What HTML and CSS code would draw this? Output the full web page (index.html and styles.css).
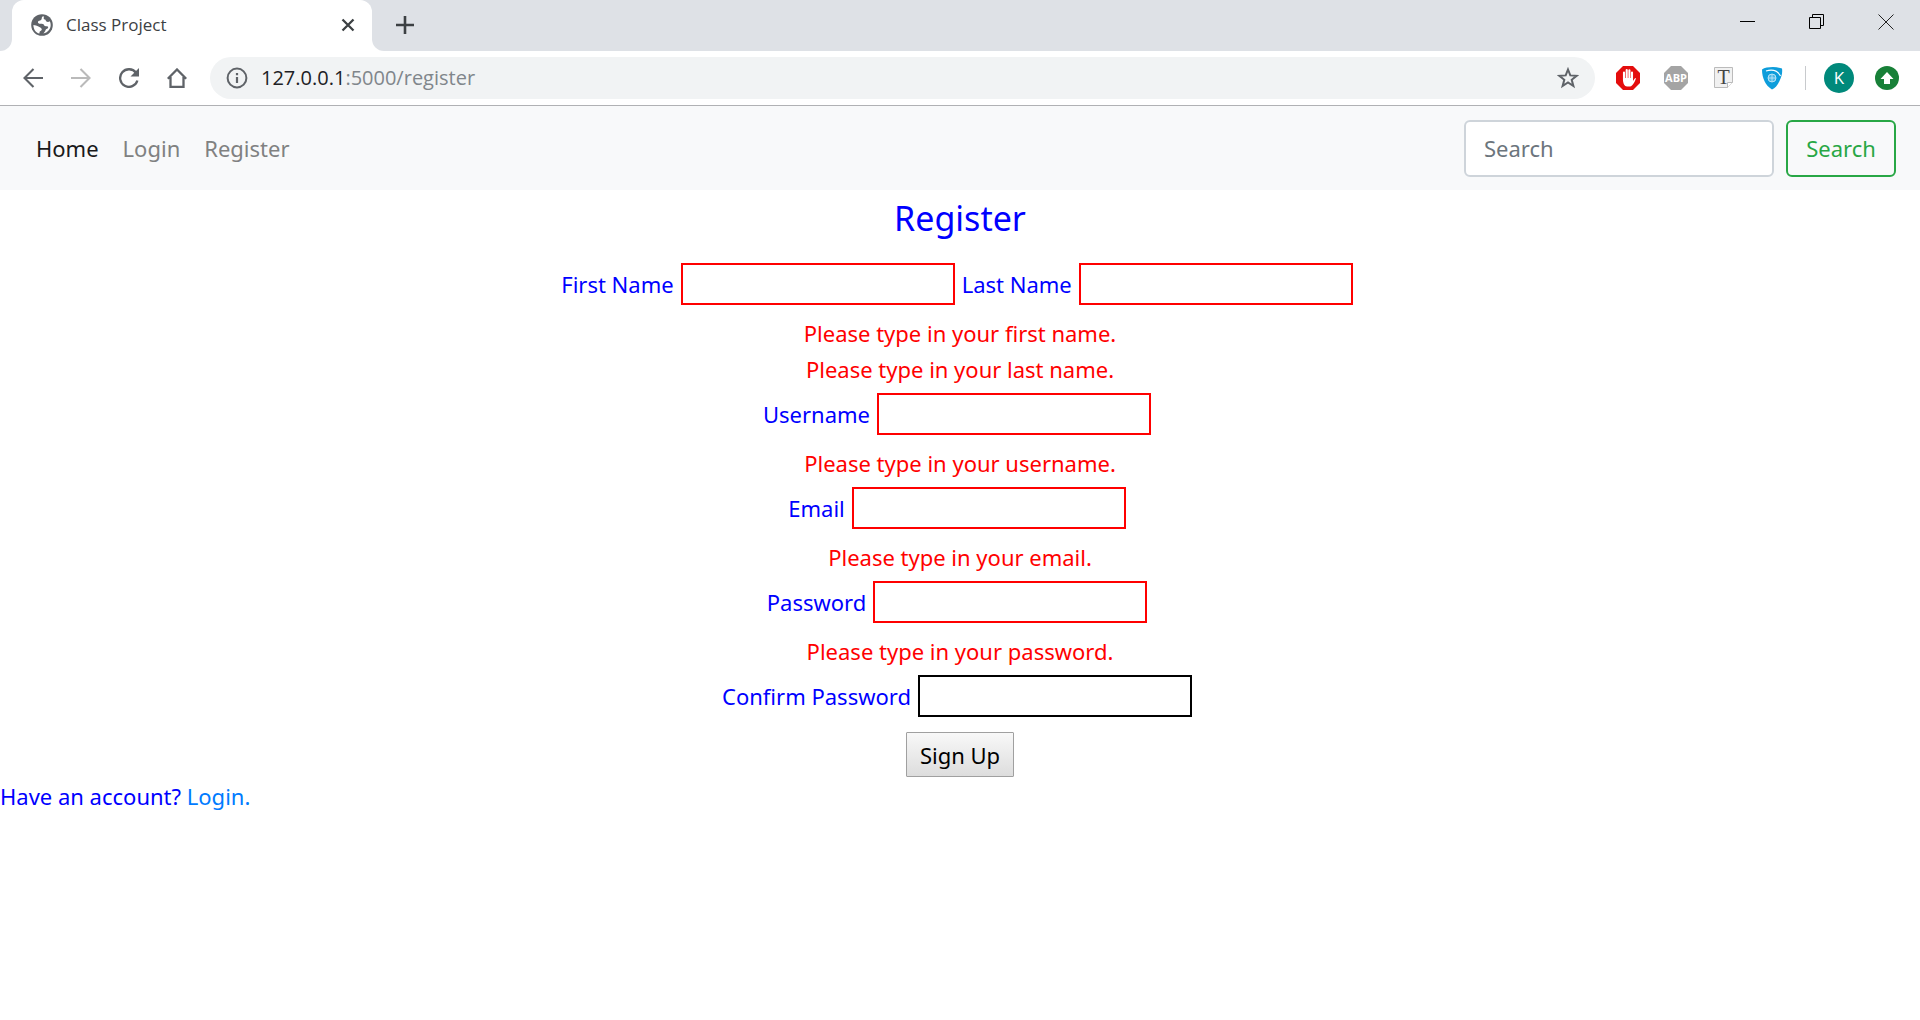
FILE: index.html
```html
<!DOCTYPE html>
<html lang="en">
<head>
<meta charset="utf-8">
<title>Class Project</title>
<link rel="stylesheet" href="styles.css">
</head>
<body>
<header class="browser">
  <div class="tabstrip">
    <div class="strip-start"></div>
    <div class="tab-slot">
      <div class="tab">
        <svg class="icon22" viewBox="0 0 22 22"><circle cx="11" cy="11" r="10.800" fill="#5f6368"/><path fill="#fff" d="M12 2.300C10 3.300 11.500 5 10 6 8.800 7 7.500 6.200 7 7.800c-.5 1.500 1 2 2.500 2 2 0 3 0 3.500 1.300.4 1.300 2 1.200 3 1.200 1.200 0 1.600 1 .8 2-1 1-1.600.6-2.200 1.700-.6 1.300-1 2-2.200 3.500C16.500 18.800 19.700 15 19.700 11c0-1.500-.3-2.700-.9-3.800-1 .8-2.300 1-3.300.3-1-.8-.5-1.800-1.600-2-1.300-.3-1.600-1.400-.8-2.800zM2.400 11c0 4.500 2.500 7.700 6 8.600.2-1.600 0-2.200 1.500-2.800 1.500-.8 1-2.200-.2-3C8 12.800 6.500 11.500 2.400 11z"/></svg>
        <span class="tab-title">Class Project</span>
        <button class="plain" aria-label="Close tab"><svg class="icon14" viewBox="0 0 14 14"><path d="M1.500 1.500l11 11M12.500 1.500l-11 11" stroke="#3c4043" stroke-width="2.300"/></svg></button>
      </div>
    </div>
    <div class="strip-rest">
      <button class="plain" aria-label="New tab"><svg class="icon18" viewBox="0 0 18 18"><path d="M9 0v18M0 9h18" stroke="#3c4043" stroke-width="2.600"/></svg></button>
      <div class="window-buttons">
        <button class="plain" aria-label="Minimize"><svg class="icon16" viewBox="0 0 16 16"><path d="M0 7.500h15" stroke="#000"/></svg></button>
        <button class="plain" aria-label="Restore"><svg class="icon16" viewBox="0 0 16 16"><path d="M.5 3.500h11v11H.5zM3.500 3.500v-3h11v11h-3" fill="none" stroke="#000"/></svg></button>
        <button class="plain" aria-label="Close window"><svg class="icon16" viewBox="0 0 16 16"><path d="M.5.5l15 15M15.500.5l-15 15" stroke="#222"/></svg></button>
      </div>
    </div>
  </div>
  <div class="toolbar">
    <div class="controls">
      <button class="plain" aria-label="Back"><svg class="icon20" viewBox="0 0 20 20"><path d="M20 10H2M10.500 1L1.500 10l9 9" fill="none" stroke="#5f6368" stroke-width="2.100"/></svg></button>
      <button class="plain" aria-label="Forward"><svg class="icon20" viewBox="0 0 20 20"><path d="M0 10h18M9.500 1l9 9-9 9" fill="none" stroke="#bababa" stroke-width="2.100"/></svg></button>
      <button class="plain" aria-label="Reload"><svg class="icon20" viewBox="0 0 20 20"><path d="M17 4.800A8.800 8.800 0 1 0 18.400 12.500" fill="none" stroke="#5f6368" stroke-width="2.300"/><path d="M20 0v8.500h-8.500z" fill="#5f6368"/></svg></button>
      <button class="plain" aria-label="Home page"><svg class="icon20" viewBox="0 0 20 20"><path d="M.8 10.800L10 1.500l9.200 9.300M3.500 9v9.800h13V9" fill="none" stroke="#5f6368" stroke-width="2.300"/></svg></button>
    </div>
    <div class="omnibox">
      <svg class="icon22" viewBox="0 0 22 22"><circle cx="11" cy="11" r="9.400" fill="none" stroke="#5f6368" stroke-width="2"/><path d="M11 10v6M11 6v2.200" stroke="#5f6368" stroke-width="2.200"/></svg>
      <span class="url">127.0.0.1<span class="url-path">:5000/register</span></span>
      <button class="plain" aria-label="Bookmark"><svg class="icon22" viewBox="0 0 22 22"><path d="M11 2.500l2.300 5.900 6.300.4-4.900 4 1.700 6.200-5.400-3.500-5.400 3.500 1.700-6.200-4.900-4 6.300-.4z" fill="none" stroke="#5f6368" stroke-width="2"/></svg></button>
    </div>
    <div class="extensions">
      <svg class="icon24" viewBox="0 0 24 24"><path d="M7 0h10l7 7v10l-7 7H7l-7-7V7z" fill="#e40d0d"/><path d="M8 14V6.500M10.700 12V4M13.400 12V4.300M16 13V6.500" stroke="#fff" stroke-width="2.100" stroke-linecap="round"/><path d="M7 12h10v3c1.500-2.500 2.300-3.500 2.800-3 .6.500-2.800 8.500-5.800 8.500h-3C8.500 20.500 7 17 7 14z" fill="#fff"/></svg>
      <svg class="icon24" viewBox="0 0 24 24"><path d="M7 0h10l7 7v10l-7 7H7l-7-7V7z" fill="#a4a4a4"/><text class="abp" x="12" y="16">ABP</text></svg>
      <svg class="icon24" viewBox="0 0 24 24"><path d="M2.500 1.500h18v15l-5 5h-13z" fill="#f1f1f1" stroke="#bbb"/><path d="M15.500 21.500v-5h5" fill="#fff" stroke="#bbb"/><text class="tee" x="11.500" y="18">T</text></svg>
      <svg class="icon24" viewBox="0 0 24 24"><path d="M2 3.500C6 .8 16 .3 22 2.500c.6 4-.2 8-2.500 12.500-2 4-4.500 7.500-7.500 8.500C5.500 19.500 2 12 2 3.500z" fill="#0d9ddb"/><path d="M6 5c7-2 11.500-.5 14.500 5" fill="none" stroke="#fff" stroke-width="1.200"/><circle cx="12" cy="12" r="4" fill="#4db7e5" stroke="#d5effa" stroke-width=".8"/><path d="M8 12h8M12 8v8" stroke="#d5effa" stroke-width=".7"/></svg>
      <span class="divider"></span>
      <span class="avatar">K</span>
      <svg class="icon24" viewBox="0 0 24 24"><circle cx="12" cy="12" r="12" fill="#188038"/><path d="M12 6l6.500 7H15v5H9v-5H5.500z" fill="#fff"/></svg>
    </div>
  </div>
</header>

<nav class="navbar">
  <div class="nav-links">
    <a class="nav-link active" href="#">Home</a>
    <a class="nav-link" href="#">Login</a>
    <a class="nav-link" href="#">Register</a>
  </div>
  <form class="search">
    <input class="search-input" type="search" placeholder="Search" aria-label="Search">
    <button class="search-button" type="submit">Search</button>
  </form>
</nav>

<main>
  <form class="register">
    <h1 class="heading">Register</h1>
    <div class="row">
      <label for="first">First Name</label>
      <input class="field invalid" id="first" type="text">
      <label for="last">Last Name</label>
      <input class="field invalid" id="last" type="text">
    </div>
    <p class="error">Please type in your first name.</p>
    <p class="error">Please type in your last name.</p>
    <div class="row">
      <label for="user">Username</label>
      <input class="field invalid" id="user" type="text">
    </div>
    <p class="error">Please type in your username.</p>
    <div class="row">
      <label for="email">Email</label>
      <input class="field invalid" id="email" type="text">
    </div>
    <p class="error">Please type in your email.</p>
    <div class="row">
      <label for="pass">Password</label>
      <input class="field invalid" id="pass" type="password">
    </div>
    <p class="error">Please type in your password.</p>
    <div class="row">
      <label for="confirm">Confirm Password</label>
      <input class="field" id="confirm" type="password">
    </div>
    <button class="signup" type="submit">Sign Up</button>
  </form>
  <p class="account">Have an account? <a href="#">Login.</a></p>
</main>
</body>
</html>
```

FILE: styles.css
```css
* { box-sizing: border-box; }

body {
  margin: 0;
  background: #fff;
  color: #00f;
  font-family: "Noto Sans", "Open Sans", sans-serif;
  font-size: 22px;
  font-weight: 400;
  line-height: 36px;
}

button, input { font: inherit; }
p { margin: 0; }
svg { display: block; flex: none; }

.icon14 { width: 14px; height: 14px; }
.icon16 { width: 16px; height: 16px; }
.icon18 { width: 18px; height: 18px; }
.icon20 { width: 20px; height: 20px; }
.icon22 { width: 22px; height: 22px; }
.icon24 { width: 24px; height: 24px; }

.plain { padding: 0; border: 0; background: none; }

/* Browser window */
.browser { border-bottom: 1px solid #b0b1b4; font-family: "Open Sans", "Noto Sans", sans-serif; }

.tabstrip { display: flex; height: 51px; }
.strip-start { width: 12px; background: #dee1e6; border-bottom-right-radius: 12px; }
.tab-slot { width: 360px; background: linear-gradient(#dee1e6 50%, #fff 50%); }
.tab {
  display: flex;
  align-items: center;
  height: 100%;
  padding: 0 17px 2px 19px;
  background: #fff;
  border-radius: 12px 12px 0 0;
}
.tab-title { flex: 1; padding-left: 13px; font-size: 17px; line-height: 24px; color: #3c4043; }
.strip-rest {
  display: flex;
  flex: 1;
  align-items: center;
  justify-content: space-between;
  padding: 0 26px 1px 24px;
  background: #dee1e6;
  border-bottom-left-radius: 12px;
}
.window-buttons { display: flex; gap: 53px; padding-bottom: 7px; }

.toolbar { display: flex; align-items: center; height: 54px; padding: 0 21px 0 23px; }
.controls { display: flex; gap: 28px; }
.omnibox {
  display: flex;
  flex: 1;
  align-items: center;
  height: 42px;
  margin: 0 21px 0 23px;
  padding: 0 16px;
  background: #f1f3f4;
  border-radius: 21px;
}
.url { flex: 1; padding-left: 13px; font-size: 20px; line-height: 28px; color: #202124; }
.url-path { color: #80868b; }
.extensions { display: flex; align-items: center; gap: 24px; }
.abp { font: bold 11px "Open Sans", sans-serif; fill: #fff; text-anchor: middle; }
.tee { font: 20px "Liberation Serif", serif; fill: #444; text-anchor: middle; }
.divider { width: 1px; height: 24px; margin: 0 -6px 0 -3px; background: #c8cacd; }
.avatar {
  width: 30px;
  height: 30px;
  margin-right: -3px;
  border-radius: 50%;
  background: #00897b;
  color: #fff;
  font-size: 17px;
  line-height: 30px;
  text-align: center;
}

/* Site navigation */
.navbar {
  display: flex;
  align-items: center;
  justify-content: space-between;
  height: 84px;
  padding: 0 24px;
  background: #f8f9fa;
}
.nav-links { display: flex; }
.nav-link { padding: 0 12px; color: #808181; text-decoration: none; }
.nav-link.active { color: #1a1a1a; }
.search { display: flex; gap: 12px; }
.search-input {
  width: 310px;
  height: 57px;
  padding: 0 18px;
  border: 2px solid #ced4da;
  border-radius: 6px;
  background: #fff;
  appearance: none;
}
.search-input::placeholder { color: #6c757d; opacity: 1; }
.search-button {
  width: 110px;
  height: 57px;
  padding: 0;
  border: 2px solid #28a745;
  border-radius: 6px;
  background: transparent;
  color: #28a745;
}

/* Registration form */
.register { text-align: center; }
.heading { margin: 0 0 11px; font-size: 34px; font-weight: 400; line-height: 56px; }
.row {
  display: flex;
  justify-content: center;
  align-items: center;
  gap: 7px;
  padding: 6px 6px 10px 0;
}
.field {
  width: 274px;
  height: 42px;
  padding: 2px;
  border: 2px solid #000;
  border-radius: 0;
  background: #fff;
}
.field.invalid { border-color: #f00; }
.error { color: #f00; }
.signup {
  display: block;
  width: 108px;
  height: 45px;
  margin: 5px auto 1px;
  padding: 0;
  border: 1px solid #a0a0a0;
  border-radius: 1px;
  background: linear-gradient(#f8f8f8, #ddd);
  color: #000;
}
.account a { color: #007bff; text-decoration: none; }
```
